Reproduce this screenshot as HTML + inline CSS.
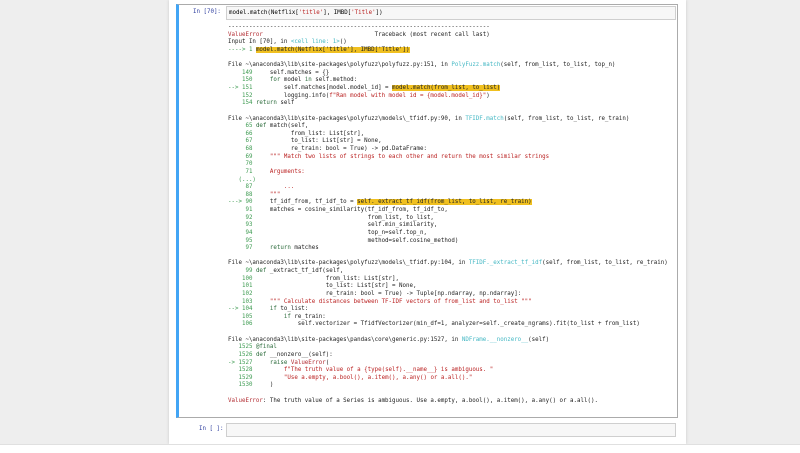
<!DOCTYPE html>
<html><head><meta charset="utf-8"><style>
body{margin:0;width:800px;height:452px;background:#eeeeee;position:relative;overflow:hidden;font-family:"DejaVu Sans Mono","Liberation Mono",monospace}
#nb{position:absolute;left:169px;top:0;width:517px;height:444px;background:#fff;box-shadow:0 0 3px rgba(0,0,0,.15)}
#foot{position:absolute;left:0;top:444px;width:800px;height:8px;background:#fff;border-top:1px solid #e0e0e0}
#cell{position:absolute;left:176px;top:4px;width:502px;height:414px;border:1px solid #ababab;border-left:3px solid #42a5f5;box-sizing:border-box}
.prompt{position:absolute;font-size:5.8px;color:#303f9f;}
.inp{position:absolute;left:226px;width:450px;height:14px;background:#f7f7f7;border:1px solid #cfcfcf;box-sizing:border-box;font-size:5.8px;line-height:12px;padding-left:2px;color:#000}
pre{position:absolute;left:228px;top:24px;margin:0;font-family:inherit;font-size:5.8px;line-height:7.63px;color:#222}
.r{color:#b22b31}.g{color:#3c9a50}.c{color:#45b8c4}.h{background:#f0c020}.k{color:#2a6a3a}.s{color:#ba2121}
</style></head><body>
<div id="nb"></div>
<div id="cell"></div>
<div class="prompt" style="left:193px;top:9px">In [70]:</div>
<div class="inp" style="top:6px">model.match(Netflix[<span class="s">'title'</span>], IMBD[<span class="s">'Title'</span>])</div>
<pre>---------------------------------------------------------------------------
<span class="r">ValueError</span>                                Traceback (most recent call last)
Input In [70], in <span class="c">&lt;cell line: 1&gt;</span>()
<span class="g">----&gt; 1</span> <span class="h">model.match(Netflix['title'], IMBD['Title'])</span>

File ~\anaconda3\lib\site-packages\polyfuzz\polyfuzz.py:151, in <span class="c">PolyFuzz.match</span>(self, from_list, to_list, top_n)
<span class="g">    149</span>     self.matches = {}
<span class="g">    150</span>     <span class="k">for</span> model <span class="k">in</span> self.method:
<span class="g">--&gt; 151</span>         self.matches[model.model_id] = <span class="h">model.match(from_list, to_list)</span>
<span class="g">    152</span>         logging.info(<span class="s">f"Ran model with model id = {model.model_id}"</span>)
<span class="g">    154</span> <span class="k">return</span> self

File ~\anaconda3\lib\site-packages\polyfuzz\models\_tfidf.py:90, in <span class="c">TFIDF.match</span>(self, from_list, to_list, re_train)
<span class="g">     65</span> <span class="k">def</span> match(self,
<span class="g">     66</span>           from_list: List[str],
<span class="g">     67</span>           to_list: List[str] = None,
<span class="g">     68</span>           re_train: bool = True) -&gt; pd.DataFrame:
<span class="g">     69</span>     <span class="s">""" Match two lists of strings to each other and return the most similar strings</span>
<span class="g">     70</span> 
<span class="g">     71</span> <span class="s">    Arguments:</span>
<span class="g">   (...)</span>
<span class="g">     87</span> <span class="s">        ...</span>
<span class="g">     88</span> <span class="s">    """</span>
<span class="g">---&gt; 90</span>     tf_idf_from, tf_idf_to = <span class="h">self._extract_tf_idf(from_list, to_list, re_train)</span>
<span class="g">     91</span>     matches = cosine_similarity(tf_idf_from, tf_idf_to,
<span class="g">     92</span>                                 from_list, to_list,
<span class="g">     93</span>                                 self.min_similarity,
<span class="g">     94</span>                                 top_n=self.top_n,
<span class="g">     95</span>                                 method=self.cosine_method)
<span class="g">     97</span>     <span class="k">return</span> matches

File ~\anaconda3\lib\site-packages\polyfuzz\models\_tfidf.py:104, in <span class="c">TFIDF._extract_tf_idf</span>(self, from_list, to_list, re_train)
<span class="g">     99</span> <span class="k">def</span> _extract_tf_idf(self,
<span class="g">    100</span>                     from_list: List[str],
<span class="g">    101</span>                     to_list: List[str] = None,
<span class="g">    102</span>                     re_train: bool = True) -&gt; Tuple[np.ndarray, np.ndarray]:
<span class="g">    103</span>     <span class="s">""" Calculate distances between TF-IDF vectors of from_list and to_list """</span>
<span class="g">--&gt; 104</span>     <span class="k">if</span> to_list:
<span class="g">    105</span>         <span class="k">if</span> re_train:
<span class="g">    106</span>             self.vectorizer = TfidfVectorizer(min_df=1, analyzer=self._create_ngrams).fit(to_list + from_list)

File ~\anaconda3\lib\site-packages\pandas\core\generic.py:1527, in <span class="c">NDFrame.__nonzero__</span>(self)
<span class="g">   1525</span> <span class="k">@final</span>
<span class="g">   1526</span> <span class="k">def</span> __nonzero__(self):
<span class="g">-&gt; 1527</span>     <span class="k">raise</span> <span class="r">ValueError</span>(
<span class="g">   1528</span>         <span class="s">f"The truth value of a {type(self).__name__} is ambiguous. "</span>
<span class="g">   1529</span>         <span class="s">"Use a.empty, a.bool(), a.item(), a.any() or a.all()."</span>
<span class="g">   1530</span>     )

<span class="r">ValueError</span>: The truth value of a Series is ambiguous. Use a.empty, a.bool(), a.item(), a.any() or a.all().</pre>
<div class="prompt" style="left:199px;top:426px">In [ ]:</div>
<div class="inp" style="top:423px"></div>
<div id="foot"></div>
</body></html>
